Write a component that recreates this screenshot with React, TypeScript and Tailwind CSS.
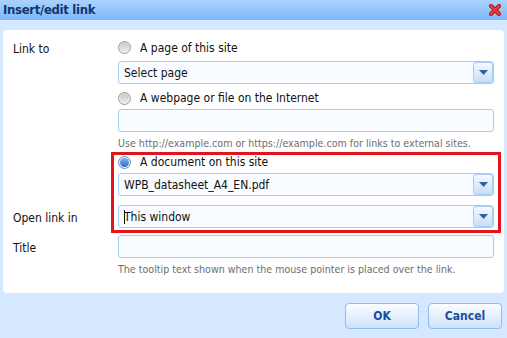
import React from "react";

const font = { fontFamily: '"DejaVu Sans Condensed", "DejaVu Sans", Tahoma, sans-serif' };

export default function App() {
  return (
    <div className="w-[507px] h-[338px] bg-[#d4e8ff] overflow-hidden" style={font}>
      {/* ── Title bar ───────────────────────────── */}
      <div className="h-[20px] flex items-center justify-between pl-[3px] pr-[6px] bg-gradient-to-b from-[#aad3fd] to-[#7fb7f8]">
        <span className="text-[13px] font-bold text-[#0f3670] tracking-tight">Insert/edit link</span>
        <CloseIcon />
      </div>

      {/* ── Body panel ──────────────────────────── */}
      <div className="relative mx-[3px] mt-[10px] bg-white rounded-[4px] pl-[10px] pr-[10px] pt-[7px] pb-[17px] text-[12px] text-[#111]">
        <Row label="Link to">
          <Radio label="A page of this site" />
        </Row>
        <Row className="mt-[3px]">
          <Select value="Select page" />
        </Row>
        <Row className="mt-[4px]">
          <Radio label="A webpage or file on the Internet" />
        </Row>
        <Row className="mt-[1px]">
          <Input />
        </Row>
        <Row className="mt-[4px]">
          <Hint text="Use http://example.com or https://example.com for links to external sites." />
        </Row>
        <Row className="mt-[2px]">
          <Radio label="A document on this site" checked />
        </Row>
        <Row className="mt-[1px]">
          <Select value="WPB_datasheet_A4_EN.pdf" />
        </Row>
        <Row className="mt-[9px]" label="Open link in">
          <Select value="This window" caret />
        </Row>
        <Row className="mt-[7px]" label="Title">
          <Input />
        </Row>
        <Row className="mt-[4px]">
          <Hint text="The tooltip text shown when the mouse pointer is placed over the link." />
        </Row>

        {/* highlight box */}
        <div className="absolute left-[108px] top-[122px] w-[390px] h-[81px] border-[3px] border-[#e3141c] pointer-events-none" />
      </div>

      {/* ── Buttons ─────────────────────────────── */}
      <div className="flex justify-end gap-[9px] pr-[5px] mt-[10px]">
        <Button label="OK" />
        <Button label="Cancel" />
      </div>
    </div>
  );
}

function Row({ label, children, className = "" }: { label?: string; children: React.ReactNode; className?: string }) {
  return (
    <div className={`flex items-center ${className}`}>
      <div className="w-[105px] shrink-0 text-[12px] text-[#111] pt-[3px]">{label}</div>
      <div className="flex-1 min-w-0">{children}</div>
    </div>
  );
}

function Radio({ label, checked = false }: { label: string; checked?: boolean }) {
  return (
    <div className="h-[20px] flex items-center gap-[9px]">
      <span
        className={`w-[13px] h-[13px] rounded-full border flex items-center justify-center ${
          checked ? "border-[#6a8fb8] bg-[#e6f0fb]" : "border-[#9a9a9a] bg-gradient-to-b from-[#d8d8d8] to-[#f4f4f4]"
        }`}
      >
        {checked ? (
          <span className="w-[9px] h-[9px] rounded-full bg-gradient-to-b from-[#7db3ee] to-[#2d6fc4]" />
        ) : (
          <span className="w-[9px] h-[9px] rounded-full bg-gradient-to-b from-[#c9c9c9] to-[#ececec]" />
        )}
      </span>
      <span className="text-[12px] text-[#111]">{label}</span>
    </div>
  );
}

function Select({ value, caret = false }: { value: string; caret?: boolean }) {
  return (
    <div className="h-[23px] flex items-center border border-[#a6cdf6] rounded-[3px] bg-[#f8fbff] pl-[5px]">
      <span className="flex-1 flex items-center text-[12px] text-[#111]">
        {caret && <span className="w-px h-[14px] bg-[#111] -mr-px" />}
        {value}
      </span>
      <span className="w-[20px] h-[21px] flex items-center justify-center border border-[#a6cdf6] rounded-[3px] bg-gradient-to-b from-[#f4f9ff] to-[#c7defa]">
        <svg width="9" height="5" viewBox="0 0 9 5">
          <path d="M0 0h9L4.5 5z" fill="#33639e" />
        </svg>
      </span>
    </div>
  );
}

function Input() {
  return <div className="h-[23px] border border-[#a6cdf6] rounded-[3px] bg-[#f8fbff]" />;
}

function Hint({ text }: { text: string }) {
  return <div className="h-[14px] leading-[14px] text-[10.6px] text-[#6e6e6e] whitespace-nowrap">{text}</div>;
}

function Button({ label }: { label: string }) {
  return (
    <button className="w-[74px] h-[26px] rounded-[4px] border border-[#8fbcee] bg-gradient-to-b from-[#fbfdff] to-[#cde2fb] text-[12px] font-bold text-[#1a4fa0]">
      {label}
    </button>
  );
}

const CloseIcon = () => (
  <svg width="12" height="12" viewBox="0 0 12 12">
    <path d="M2 2l8 8M10 2l-8 8" stroke="#9b1010" strokeWidth="4" strokeLinecap="square" />
    <path d="M2 2l8 8M10 2l-8 8" stroke="#f23b3b" strokeWidth="2.4" strokeLinecap="square" />
  </svg>
);
